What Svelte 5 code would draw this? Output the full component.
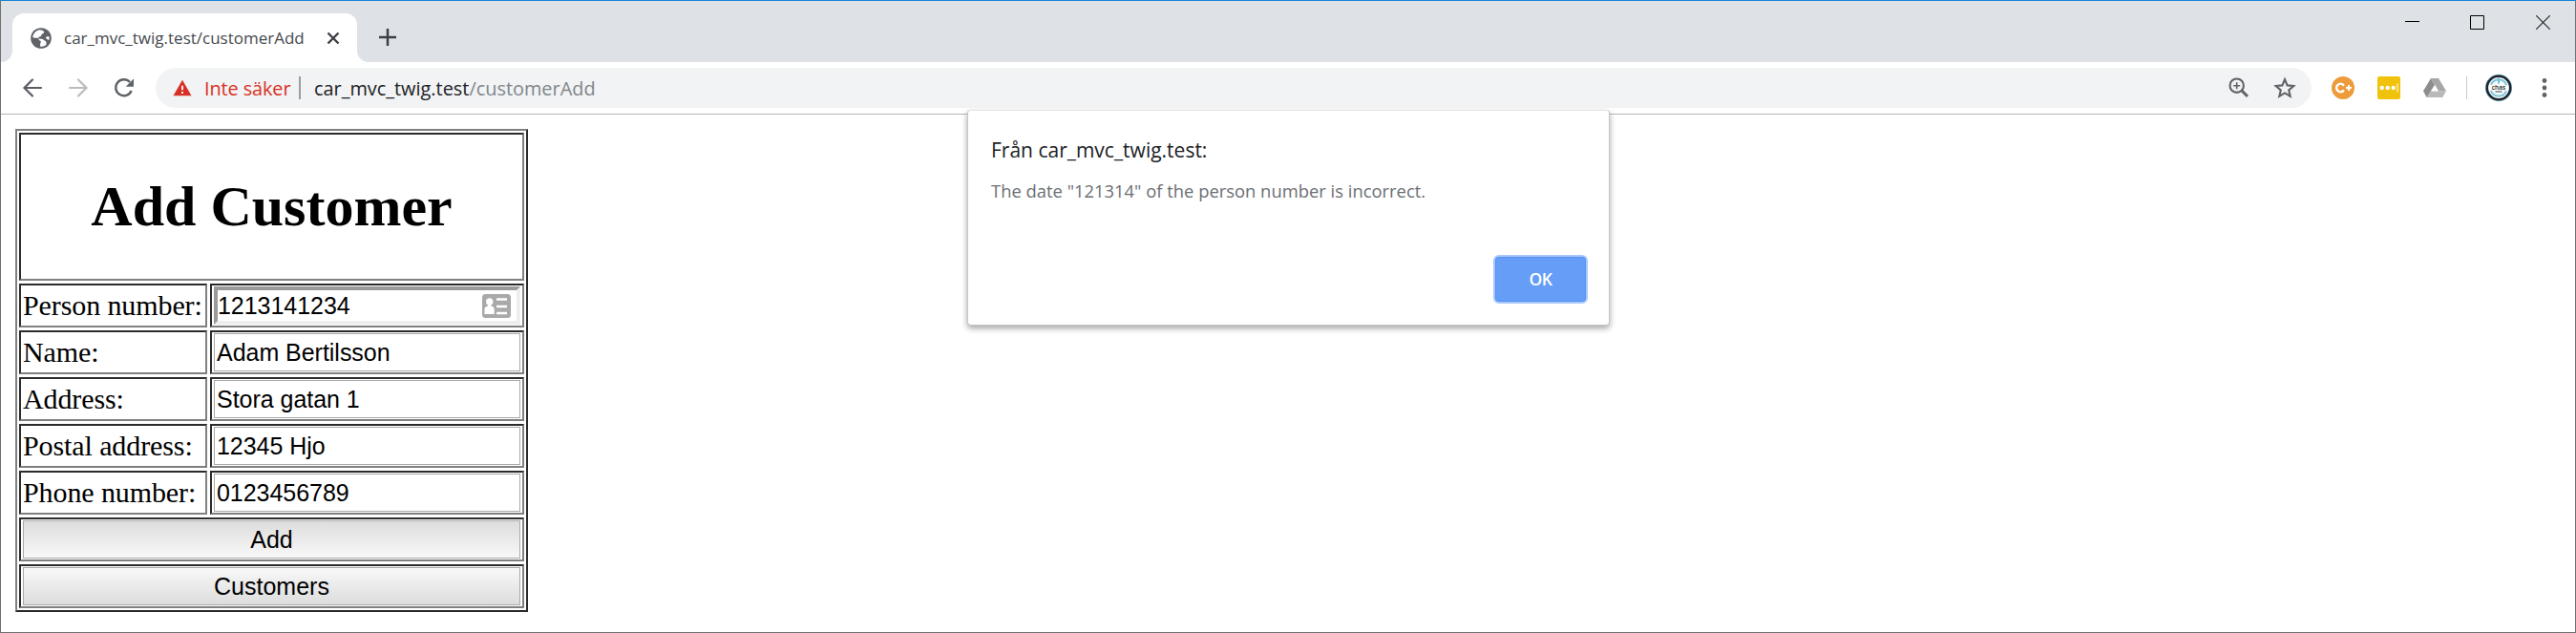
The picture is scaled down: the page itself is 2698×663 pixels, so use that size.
<script>
  const fields = [
    { label: 'Person number:', value: '1213141234', focused: true },
    { label: 'Name:', value: 'Adam Bertilsson' },
    { label: 'Address:', value: 'Stora gatan 1' },
    { label: 'Postal address:', value: '12345 Hjo' },
    { label: 'Phone number:', value: '0123456789' }
  ];
</script>

<div class="window">
  <header class="tabstrip">
    <div class="tab">
      <svg class="favicon" width="24" height="24" viewBox="0 0 24 24">
        <circle cx="12" cy="12" r="10.8" fill="#5f6368" />
        <path d="M11 3.2C7 3.7 3.8 6.8 3.2 11c1.6 1 4 .6 5.300.8 1.500.4.700 2.200 2 2.600 1.300.4 1.700 1.100 1 2.300-.5 1.100-.6 2.600-.2 4.100 2.200.3 4.500-.6 6.200-2.100-.1-1.500.3-3-.9-3.600-1.600-.7-2-1.900-3.600-2.300-1.500-.4-3.300.2-3.800-.9-.4-1.200 1.400-1.500 2.400-1.900 1.100-.5.4-1.900 1.600-2.500 1.300-.6 2.200-1.200 1.900-2.600A9 9 0 0 0 11 3.200z" fill="#fff" />
        <path d="M20.700 10.500c-1.800-.7-3.300-.3-3.600.9-.2 1.200 1.300 1.600 3.300 2.500z" fill="#fff" />
      </svg>
      <span class="tab-title">car_mvc_twig.test/customerAdd</span>
      <svg class="tab-close" width="14" height="14" viewBox="0 0 14 14">
        <path d="M1.500 1.500l11 11m0-11l-11 11" stroke="#3c4043" stroke-width="2.400" />
      </svg>
    </div>
    <svg class="newtab" width="18" height="18" viewBox="0 0 18 18">
      <path d="M9 .5v17M.5 9h17" stroke="#3c4043" stroke-width="2.500" stroke-linecap="round" />
    </svg>
    <div class="controls">
      <svg width="15" height="15" viewBox="0 0 15 15"><path d="M0 6.500h15" stroke="#000" /></svg>
      <svg class="maximize" width="15" height="15" viewBox="0 0 15 15"><path d="M.5.5h14v14H.5z" fill="none" stroke="#000" /></svg>
      <svg width="15" height="15" viewBox="0 0 15 15"><path d="M.2.2l14.600 14.600M14.800.2L.2 14.800" stroke="#222" stroke-width="1.100" /></svg>
    </div>
  </header>

  <nav class="toolbar">
    <div class="nav">
      <svg width="22" height="22" viewBox="0 0 22 22"><path d="M20 11H3M11 2.500L2.500 11l8.500 8.500" fill="none" stroke="#5a5e63" stroke-width="2.200" stroke-linecap="round" /></svg>
      <svg width="22" height="22" viewBox="0 0 22 22"><path d="M2 11h17M11 2.500l8.500 8.500-8.500 8.500" fill="none" stroke="#babcbe" stroke-width="2.200" stroke-linecap="round" /></svg>
      <svg width="22" height="22" viewBox="0 0 22 22">
        <path d="M18.600 14A8.500 8.500 0 1 1 17 5" fill="none" stroke="#5f6368" stroke-width="2.400" />
        <path d="M21 1.500v8.300h-8.300z" fill="#5f6368" />
      </svg>
    </div>
    <div class="omnibox">
      <svg class="warn" width="20" height="18" viewBox="0 0 20 18">
        <path d="M10 .7L19.500 17.300H.5z" fill="#d93025" />
        <path d="M10 6.700v4.600m0 1.700v2.100" stroke="#fff" stroke-width="1.900" />
      </svg>
      <span class="insecure">Inte säker</span>
      <span class="divider"></span>
      <span class="url">car_mvc_twig.test<i>/customerAdd</i></span>
      <svg class="zoomicon" width="22" height="22" viewBox="0 0 22 22">
        <circle cx="8.700" cy="8.700" r="7.200" fill="none" stroke="#5f6368" stroke-width="2.100" />
        <path d="M8.700 5.200v7M5.200 8.700h7" stroke="#5f6368" stroke-width="1.600" />
        <path d="M14 14l6 6" stroke="#5f6368" stroke-width="3" />
      </svg>
      <svg width="24" height="24" viewBox="0 0 24 24">
        <path d="M12 3.200l2.600 6.200 6.700.6-5.100 4.400 1.500 6.500-5.700-3.500-5.700 3.500 1.500-6.500L2.700 10l6.700-.6z" fill="none" stroke="#5f6368" stroke-width="2.100" />
      </svg>
    </div>
    <svg class="ext" width="24" height="24" viewBox="0 0 24 24">
      <circle cx="12" cy="12" r="12" fill="#ed9b3b" />
      <path d="M12.300 9a4.200 4.200 0 1 0 0 6" fill="none" stroke="#fff" stroke-width="2.500" stroke-linecap="round" />
      <path d="M18 9v6M15 12h6" stroke="#fff" stroke-width="2.100" />
    </svg>
    <svg class="ext" width="24" height="24" viewBox="0 0 24 24">
      <rect width="24" height="24" rx="2" fill="#f0c20c" />
      <g fill="#fff"><circle cx="4.700" cy="12" r="2.200" /><circle cx="10.700" cy="12" r="2.200" /><circle cx="16.700" cy="12" r="2.200" /></g>
      <path d="M21 7.500v9" stroke="#fff4c4" stroke-width="1.300" />
    </svg>
    <svg class="ext" width="24" height="24" viewBox="0 0 24 24">
      <path d="M8 2h8l8 13.300h-8z" fill="#a6a6a6" />
      <path d="M7.900 15.300H24L20.300 22H3.600z" fill="#b9b9b9" />
      <path d="M0 15.300L8 2l4 7-8.400 13z" fill="#8d8d8d" />
      <path d="M12 9.300l3.700 6.200H8.400z" fill="#fff" />
    </svg>
    <span class="bar"></span>
    <svg class="avatar" width="30" height="30" viewBox="0 0 30 30">
      <circle cx="15" cy="15" r="14.200" fill="#8cc9dd" />
      <circle cx="15" cy="15" r="12.200" fill="#fff" stroke="#20252d" stroke-width="2.600" />
      <circle cx="15" cy="15" r="8.700" fill="#f8fcfd" stroke="#82c7dc" stroke-width="2.200" stroke-dasharray="21 6.330" stroke-dashoffset="-3.200" />
      <path d="M15 4.500v6" stroke="#72bfd8" stroke-width="2" />
      <text x="15" y="16.500" text-anchor="middle">chas</text>
      <path d="M11.500 19h7" stroke="#6d747a" stroke-width="1.400" />
    </svg>
    <svg class="dots" width="6" height="22" viewBox="0 0 6 22">
      <g fill="#5f6368"><circle cx="3" cy="3.500" r="2.400" /><circle cx="3" cy="11" r="2.400" /><circle cx="3" cy="18.500" r="2.400" /></g>
    </svg>
  </nav>

  <main>
    <form class="table">
      <div class="cell wide"><h1>Add Customer</h1></div>
      {#each fields as field}
        <div class="cell label">{field.label}</div>
        <div class="cell">
          <div class="input" class:focused={field.focused}>
            <span>{field.value}</span>
            {#if field.focused}
              <svg width="30" height="25" viewBox="0 0 30 25">
                <rect width="30" height="25" rx="3.500" fill="#a9a9a9" />
                <circle cx="7.700" cy="8" r="3.700" fill="#fff" />
                <path d="M6 10h3.400v2.500c2.300.6 3.300 1.500 3.300 3.500v5H2.500v-5c0-2 1.300-2.900 3.500-3.500z" fill="#fff" />
                <path d="M15 5.500h11M15 13h11M15 20h11" stroke="#fff" stroke-width="2.700" />
              </svg>
            {/if}
          </div>
        </div>
      {/each}
      <div class="cell wide"><div class="button pressed">Add</div></div>
      <div class="cell wide"><div class="button">Customers</div></div>
    </form>
  </main>

  <section class="dialog">
    <h2>Från car_mvc_twig.test:</h2>
    <p>The date "121314" of the person number is incorrect.</p>
    <div class="ok">OK</div>
  </section>
</div>

<style>
  :global(body) { margin: 0; overflow: hidden; }
  .window {
    box-sizing: border-box; position: relative; width: 2698px; height: 663px; background: #fff;
    border: 1px solid #707070; border-top-color: #1883d7; overflow: hidden;
    font-family: 'Open Sans', 'Noto Sans', sans-serif;
  }
  svg { display: block; flex: none; }
  .tabstrip { display: flex; height: 64px; box-sizing: border-box; padding: 13px 26px 0 12px; background: #dee1e6; }
  .tab {
    position: relative; display: flex; align-items: center; box-sizing: border-box; width: 361px; height: 51px;
    padding: 0 18px 0 18px; background: #fff; border-radius: 12px 12px 0 0;
  }
  .tab::before, .tab::after { content: ''; position: absolute; bottom: 0; width: 12px; height: 12px; }
  .tab::before { left: -12px; background: radial-gradient(circle at 0 0, #dee1e6 11.5px, #fff 12.5px); }
  .tab::after { right: -12px; background: radial-gradient(circle at 100% 0, #dee1e6 11.5px, #fff 12.5px); }
  .tab-title { margin: 0 0 0 12px; width: 262px; font-size: 17px; line-height: 24px; color: #45494d; white-space: nowrap; }
  .tab-close { margin-left: 13px; }
  .newtab { margin: 16px 0 0 23px; }
  .controls { display: flex; margin: 2px 0 0 auto; }
  .maximize { margin: 0 54px 0 53px; }
  .toolbar { display: flex; align-items: center; height: 55px; box-sizing: border-box; padding: 0 0 0 22px; border-bottom: 1px solid #b6b6b6; }
  .nav { display: flex; gap: 26px; width: 140px; }
  .omnibox { display: flex; align-items: center; box-sizing: border-box; width: 2258px; height: 42px; padding: 0 16px 0 18px; border-radius: 21px; background: #f1f3f4; font-size: 19.9px; line-height: 28px; white-space: nowrap; }
  .insecure { width: 99px; margin: 1px 0 0 13px; color: #d93025; letter-spacing: -.1px; }
  .divider { width: 2px; height: 24px; background: #9a9da1; }
  .url { margin: 1px 0 0 14px; color: #202124; }
  .url i { font-style: normal; color: #80868b; }
  .zoomicon { margin: 0 25px 0 auto; }
  .ext { margin-left: 21px; }
  .ext + .ext { margin-left: 24px; }
  .bar { width: 1px; height: 24px; margin-left: 21px; background: #c8cacd; }
  .avatar { margin-left: 18px; }
  .avatar text { font: 600 6.5px 'Open Sans', sans-serif; fill: #222; }
  .dots { margin-left: 30px; }
  main { padding: 16px 15px; margin-top: -1px; }
  .table {
    display: grid; grid-template: 155px repeat(7, 46px) / 197px 329px; gap: 3px; width: 529px; padding: 2px;
    border: 2px solid; border-color: #808080 #2b2b2b #2b2b2b #808080;
  }
  .cell { box-sizing: border-box; border: 2px solid; border-color: #2b2b2b #808080 #808080 #2b2b2b; padding: 1px 2px; }
  .wide { grid-column: 1 / -1; }
  h1 { margin: 0; font: bold 60px/149px 'Liberation Serif', serif; text-align: center; }
  .label { font: 30px/40px 'Liberation Serif', serif; letter-spacing: -.1px; white-space: nowrap; }
  .input, .button { box-sizing: border-box; height: 40px; font: 25px/38px 'Liberation Sans', sans-serif; border: 1px solid #a9a9a9; }
  .input { display: flex; align-items: center; justify-content: space-between; padding: 0 10px 0 2px; letter-spacing: -.03px; }
  .input.focused { border: 4px solid; border-color: #9a9a9a #eee #eee #9a9a9a; padding: 0 6px 0 0; }
  .button { text-align: center; background: linear-gradient(#f8f8f8, #ddd); }
  .button.pressed { background: linear-gradient(#ddd, #f8f8f8); }
  .dialog {
    position: absolute; left: 1012px; top: 114px; box-sizing: border-box; width: 673px; height: 226px; padding: 25px 22px 22px 24px;
    display: flex; flex-direction: column; background: #fff; border: 1px solid #c6c6c6; border-top: 1px solid #e2e2e2; border-radius: 4px;
    box-shadow: 0 3px 6px rgba(0, 0, 0, .35);
  }
  h2 { margin: 0; font-size: 21px; line-height: 32px; font-weight: 400; color: #202124; }
  p { margin: 13px 0 0; font-size: 18.4px; line-height: 28px; color: #6b6e73; }
  .ok {
    box-sizing: border-box; width: 99px; height: 51px; margin: auto 0 0 auto; border: 2px solid #a8c8fb; border-radius: 6px;
    background: #669df6; box-shadow: inset 0 0 0 1px #5591f5; color: #fff; text-align: center; font-size: 17.5px; line-height: 47px; font-weight: 600; letter-spacing: -.4px;
  }
</style>
